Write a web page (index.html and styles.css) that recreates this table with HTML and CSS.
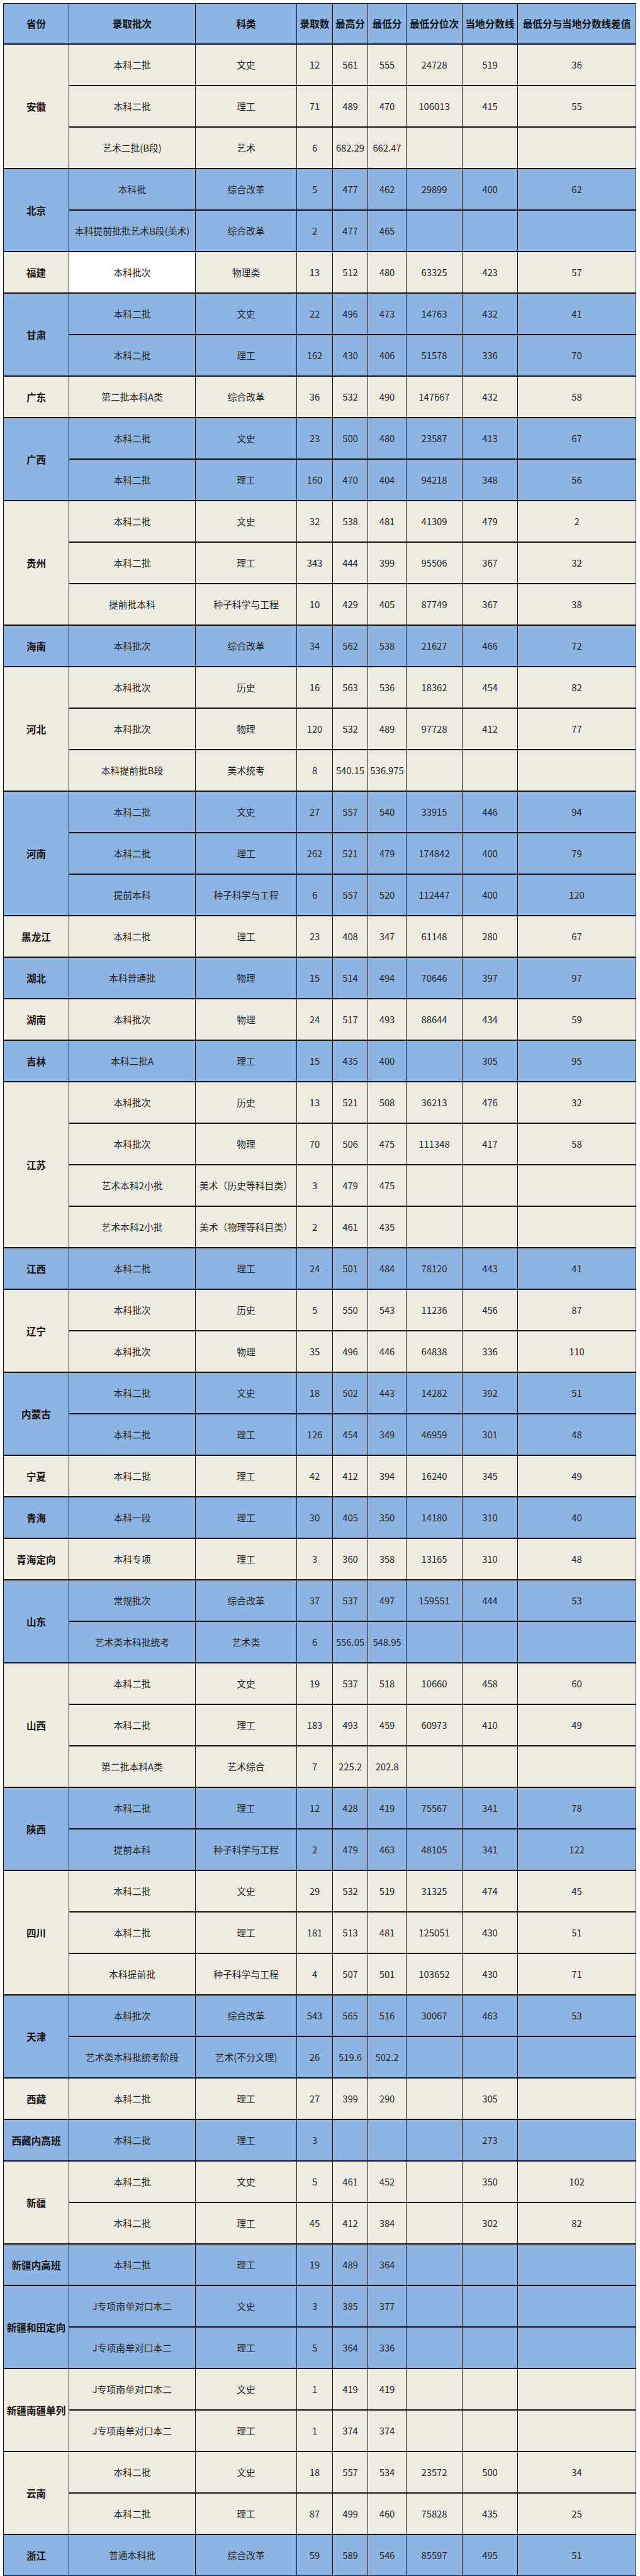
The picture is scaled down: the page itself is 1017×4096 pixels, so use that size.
FILE: index.html
```html
<!DOCTYPE html>
<html lang="zh-CN">
<head>
<meta charset="utf-8">
<title>录取分数统计</title>
<link rel="stylesheet" href="styles.css">
</head>
<body>
<div class="sheet">
  <div class="hd">省份</div><div class="hd">录取批次</div><div class="hd">科类</div><div class="hd">录取数</div><div class="hd">最高分</div><div class="hd">最低分</div><div class="hd">最低分位次</div><div class="hd">当地分数线</div><div class="hd">最低分与当地分数线差值</div>

  <div class="grp tan">
    <div class="prov r3">安徽</div>
    <div>本科二批</div><div>文史</div><div>12</div><div>561</div><div>555</div><div>24728</div><div>519</div><div>36</div>
    <div>本科二批</div><div>理工</div><div>71</div><div>489</div><div>470</div><div>106013</div><div>415</div><div>55</div>
    <div>艺术二批(B段)</div><div>艺术</div><div>6</div><div>682.29</div><div>662.47</div><div></div><div></div><div></div>
  </div>

  <div class="grp blue">
    <div class="prov r2">北京</div>
    <div>本科批</div><div>综合改革</div><div>5</div><div>477</div><div>462</div><div>29899</div><div>400</div><div>62</div>
    <div>本科提前批批艺术B段(美术)</div><div>综合改革</div><div>2</div><div>477</div><div>465</div><div></div><div></div><div></div>
  </div>

  <div class="grp tan">
    <div class="prov">福建</div>
    <div class="white">本科批次</div><div>物理类</div><div>13</div><div>512</div><div>480</div><div>63325</div><div>423</div><div>57</div>
  </div>

  <div class="grp blue">
    <div class="prov r2">甘肃</div>
    <div>本科二批</div><div>文史</div><div>22</div><div>496</div><div>473</div><div>14763</div><div>432</div><div>41</div>
    <div>本科二批</div><div>理工</div><div>162</div><div>430</div><div>406</div><div>51578</div><div>336</div><div>70</div>
  </div>

  <div class="grp tan">
    <div class="prov">广东</div>
    <div>第二批本科A类</div><div>综合改革</div><div>36</div><div>532</div><div>490</div><div>147667</div><div>432</div><div>58</div>
  </div>

  <div class="grp blue">
    <div class="prov r2">广西</div>
    <div>本科二批</div><div>文史</div><div>23</div><div>500</div><div>480</div><div>23587</div><div>413</div><div>67</div>
    <div>本科二批</div><div>理工</div><div>160</div><div>470</div><div>404</div><div>94218</div><div>348</div><div>56</div>
  </div>

  <div class="grp tan">
    <div class="prov r3">贵州</div>
    <div>本科二批</div><div>文史</div><div>32</div><div>538</div><div>481</div><div>41309</div><div>479</div><div>2</div>
    <div>本科二批</div><div>理工</div><div>343</div><div>444</div><div>399</div><div>95506</div><div>367</div><div>32</div>
    <div>提前批本科</div><div>种子科学与工程</div><div>10</div><div>429</div><div>405</div><div>87749</div><div>367</div><div>38</div>
  </div>

  <div class="grp blue">
    <div class="prov">海南</div>
    <div>本科批次</div><div>综合改革</div><div>34</div><div>562</div><div>538</div><div>21627</div><div>466</div><div>72</div>
  </div>

  <div class="grp tan">
    <div class="prov r3">河北</div>
    <div>本科批次</div><div>历史</div><div>16</div><div>563</div><div>536</div><div>18362</div><div>454</div><div>82</div>
    <div>本科批次</div><div>物理</div><div>120</div><div>532</div><div>489</div><div>97728</div><div>412</div><div>77</div>
    <div>本科提前批B段</div><div>美术统考</div><div>8</div><div>540.15</div><div>536.975</div><div></div><div></div><div></div>
  </div>

  <div class="grp blue">
    <div class="prov r3">河南</div>
    <div>本科二批</div><div>文史</div><div>27</div><div>557</div><div>540</div><div>33915</div><div>446</div><div>94</div>
    <div>本科二批</div><div>理工</div><div>262</div><div>521</div><div>479</div><div>174842</div><div>400</div><div>79</div>
    <div>提前本科</div><div>种子科学与工程</div><div>6</div><div>557</div><div>520</div><div>112447</div><div>400</div><div>120</div>
  </div>

  <div class="grp tan">
    <div class="prov">黑龙江</div>
    <div>本科二批</div><div>理工</div><div>23</div><div>408</div><div>347</div><div>61148</div><div>280</div><div>67</div>
  </div>

  <div class="grp blue">
    <div class="prov">湖北</div>
    <div>本科普通批</div><div>物理</div><div>15</div><div>514</div><div>494</div><div>70646</div><div>397</div><div>97</div>
  </div>

  <div class="grp tan">
    <div class="prov">湖南</div>
    <div>本科批次</div><div>物理</div><div>24</div><div>517</div><div>493</div><div>88644</div><div>434</div><div>59</div>
  </div>

  <div class="grp blue">
    <div class="prov">吉林</div>
    <div>本科二批A</div><div>理工</div><div>15</div><div>435</div><div>400</div><div></div><div>305</div><div>95</div>
  </div>

  <div class="grp tan">
    <div class="prov r4">江苏</div>
    <div>本科批次</div><div>历史</div><div>13</div><div>521</div><div>508</div><div>36213</div><div>476</div><div>32</div>
    <div>本科批次</div><div>物理</div><div>70</div><div>506</div><div>475</div><div>111348</div><div>417</div><div>58</div>
    <div>艺术本科2小批</div><div>美术（历史等科目类）</div><div>3</div><div>479</div><div>475</div><div></div><div></div><div></div>
    <div>艺术本科2小批</div><div>美术（物理等科目类）</div><div>2</div><div>461</div><div>435</div><div></div><div></div><div></div>
  </div>

  <div class="grp blue">
    <div class="prov">江西</div>
    <div>本科二批</div><div>理工</div><div>24</div><div>501</div><div>484</div><div>78120</div><div>443</div><div>41</div>
  </div>

  <div class="grp tan">
    <div class="prov r2">辽宁</div>
    <div>本科批次</div><div>历史</div><div>5</div><div>550</div><div>543</div><div>11236</div><div>456</div><div>87</div>
    <div>本科批次</div><div>物理</div><div>35</div><div>496</div><div>446</div><div>64838</div><div>336</div><div>110</div>
  </div>

  <div class="grp blue">
    <div class="prov r2">内蒙古</div>
    <div>本科二批</div><div>文史</div><div>18</div><div>502</div><div>443</div><div>14282</div><div>392</div><div>51</div>
    <div>本科二批</div><div>理工</div><div>126</div><div>454</div><div>349</div><div>46959</div><div>301</div><div>48</div>
  </div>

  <div class="grp tan">
    <div class="prov">宁夏</div>
    <div>本科二批</div><div>理工</div><div>42</div><div>412</div><div>394</div><div>16240</div><div>345</div><div>49</div>
  </div>

  <div class="grp blue">
    <div class="prov">青海</div>
    <div>本科一段</div><div>理工</div><div>30</div><div>405</div><div>350</div><div>14180</div><div>310</div><div>40</div>
  </div>

  <div class="grp tan">
    <div class="prov">青海定向</div>
    <div>本科专项</div><div>理工</div><div>3</div><div>360</div><div>358</div><div>13165</div><div>310</div><div>48</div>
  </div>

  <div class="grp blue">
    <div class="prov r2">山东</div>
    <div>常规批次</div><div>综合改革</div><div>37</div><div>537</div><div>497</div><div>159551</div><div>444</div><div>53</div>
    <div>艺术类本科批统考</div><div>艺术类</div><div>6</div><div>556.05</div><div>548.95</div><div></div><div></div><div></div>
  </div>

  <div class="grp tan">
    <div class="prov r3">山西</div>
    <div>本科二批</div><div>文史</div><div>19</div><div>537</div><div>518</div><div>10660</div><div>458</div><div>60</div>
    <div>本科二批</div><div>理工</div><div>183</div><div>493</div><div>459</div><div>60973</div><div>410</div><div>49</div>
    <div>第二批本科A类</div><div>艺术综合</div><div>7</div><div>225.2</div><div>202.8</div><div></div><div></div><div></div>
  </div>

  <div class="grp blue">
    <div class="prov r2">陕西</div>
    <div>本科二批</div><div>理工</div><div>12</div><div>428</div><div>419</div><div>75567</div><div>341</div><div>78</div>
    <div>提前本科</div><div>种子科学与工程</div><div>2</div><div>479</div><div>463</div><div>48105</div><div>341</div><div>122</div>
  </div>

  <div class="grp tan">
    <div class="prov r3">四川</div>
    <div>本科二批</div><div>文史</div><div>29</div><div>532</div><div>519</div><div>31325</div><div>474</div><div>45</div>
    <div>本科二批</div><div>理工</div><div>181</div><div>513</div><div>481</div><div>125051</div><div>430</div><div>51</div>
    <div>本科提前批</div><div>种子科学与工程</div><div>4</div><div>507</div><div>501</div><div>103652</div><div>430</div><div>71</div>
  </div>

  <div class="grp blue">
    <div class="prov r2">天津</div>
    <div>本科批次</div><div>综合改革</div><div>543</div><div>565</div><div>516</div><div>30067</div><div>463</div><div>53</div>
    <div>艺术类本科批统考阶段</div><div>艺术(不分文理)</div><div>26</div><div>519.6</div><div>502.2</div><div></div><div></div><div></div>
  </div>

  <div class="grp tan">
    <div class="prov">西藏</div>
    <div>本科二批</div><div>理工</div><div>27</div><div>399</div><div>290</div><div></div><div>305</div><div></div>
  </div>

  <div class="grp blue">
    <div class="prov">西藏内高班</div>
    <div>本科二批</div><div>理工</div><div>3</div><div></div><div></div><div></div><div>273</div><div></div>
  </div>

  <div class="grp tan">
    <div class="prov r2">新疆</div>
    <div>本科二批</div><div>文史</div><div>5</div><div>461</div><div>452</div><div></div><div>350</div><div>102</div>
    <div>本科二批</div><div>理工</div><div>45</div><div>412</div><div>384</div><div></div><div>302</div><div>82</div>
  </div>

  <div class="grp blue">
    <div class="prov">新疆内高班</div>
    <div>本科二批</div><div>理工</div><div>19</div><div>489</div><div>364</div><div></div><div></div><div></div>
  </div>

  <div class="grp blue">
    <div class="prov r2">新疆和田定向</div>
    <div>J专项南单对口本二</div><div>文史</div><div>3</div><div>385</div><div>377</div><div></div><div></div><div></div>
    <div>J专项南单对口本二</div><div>理工</div><div>5</div><div>364</div><div>336</div><div></div><div></div><div></div>
  </div>

  <div class="grp tan">
    <div class="prov r2">新疆南疆单列</div>
    <div>J专项南单对口本二</div><div>文史</div><div>1</div><div>419</div><div>419</div><div></div><div></div><div></div>
    <div>J专项南单对口本二</div><div>理工</div><div>1</div><div>374</div><div>374</div><div></div><div></div><div></div>
  </div>

  <div class="grp tan">
    <div class="prov r2">云南</div>
    <div>本科二批</div><div>文史</div><div>18</div><div>557</div><div>534</div><div>23572</div><div>500</div><div>34</div>
    <div>本科二批</div><div>理工</div><div>87</div><div>499</div><div>460</div><div>75828</div><div>435</div><div>25</div>
  </div>

  <div class="grp blue">
    <div class="prov">浙江</div>
    <div>普通本科批</div><div>综合改革</div><div>59</div><div>589</div><div>546</div><div>85597</div><div>495</div><div>51</div>
  </div>
</div>
</body>
</html>
```
FILE: styles.css
```css
html, body {
  margin: 0;
  padding: 0;
  background: #ffffff;
}

.sheet {
  margin: 5px 0 0 5px;
  width: 1006px;
  box-sizing: border-box;
  display: grid;
  grid-template-columns: 104px 201px 161px 57px 56px 61px 89px 88px 188px;
  grid-template-rows: 65px;
  grid-auto-rows: 66px;
  border-top: 1px solid #141414;
  border-left: 1px solid #141414;
  font-family: "Noto Sans CJK SC", "Noto Sans", sans-serif;
  font-size: 14.8px;
  color: #262626;
}

.grp {
  display: contents;
}

.grp.blue { --bg: #8db4e2; }
.grp.tan { --bg: #eeece1; }

.sheet .hd,
.grp > div {
  box-sizing: border-box;
  border-right: 1px solid #141414;
  border-bottom: 2px solid #141414;
  display: flex;
  align-items: center;
  justify-content: center;
  text-align: center;
  white-space: nowrap;
  line-height: 1.2;
  background: var(--bg);
}

.sheet .hd {
  background: #8db4e2;
  font-weight: 700;
  font-size: 15.6px;
  color: #141414;
  letter-spacing: 0;
}

.grp > .prov {
  font-weight: 700;
  font-size: 15.6px;
  color: #1a1212;
}

.grp > .white {
  background: #ffffff;
}

.r2 { grid-row: span 2; }
.r3 { grid-row: span 3; }
.r4 { grid-row: span 4; }
```
